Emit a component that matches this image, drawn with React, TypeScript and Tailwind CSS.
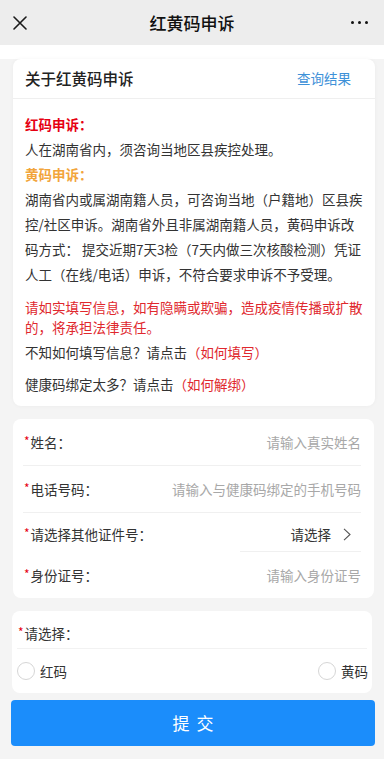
import React from "react";

const font = { fontFamily: '"Noto Sans CJK SC", "Noto Sans", sans-serif' };

function Star() {
  return <span className="text-[#e60012] text-[12px] leading-none relative -top-[1px] mr-[1px]">*</span>;
}

function Row({ label, placeholder }: { label: string; placeholder: string }) {
  return (
    <div className="h-[46px] flex items-center justify-between pl-[11px] pr-[13px]">
      <div className="flex items-center text-[#333]">
        <Star />
        <span>{label}</span>
      </div>
      <span className="text-[#a8a8a8]">{placeholder}</span>
    </div>
  );
}

export default function App() {
  return (
    <div style={font} className="w-[384px] min-h-[759px] bg-[#f4f4f4] text-[13.5px] text-[#333]">
      {/* top bar */}
      <div className="h-[45px] bg-[#ededed] grid grid-cols-[1fr_auto_1fr] items-center px-[13px]">
        <svg width="14" height="14" viewBox="0 0 14 14" className="justify-self-start">
          <path d="M1 1 L13 13 M13 1 L1 13" stroke="#1a1a1a" strokeWidth="1.6" strokeLinecap="round" />
        </svg>
        <div className="text-[17px] font-medium text-[#111] leading-none">红黄码申诉</div>
        <div className="justify-self-end flex gap-[3.5px] mr-[3px]">
          <span className="w-[3.5px] h-[3.5px] rounded-full bg-[#111]" />
          <span className="w-[3.5px] h-[3.5px] rounded-full bg-[#111]" />
          <span className="w-[3.5px] h-[3.5px] rounded-full bg-[#111]" />
        </div>
      </div>
      <div className="h-[14px] bg-white" />

      {/* card 1 */}
      <div className="ml-[13px] w-[362px] bg-white rounded-[8px] shadow-[0_0_4px_rgba(0,0,0,0.04)]">
        <div className="h-[40px] flex items-center justify-between pl-[12px] pr-[24px] border-b border-[#efefef]">
          <span className="text-[15.5px] font-medium text-[#222]">关于红黄码申诉</span>
          <span className="text-[13.5px] text-[#3e91d8]">查询结果</span>
        </div>
        <div className="pl-[12px] pr-[10px] pt-[13px] pb-[9px]">
          <div className="leading-[25px]">
            <div className="text-[#e60012] font-bold">红码申诉：</div>
            <div>人在湖南省内，须咨询当地区县疾控处理。</div>
            <div className="text-[#f2a53c] font-bold">黄码申诉：</div>
            <div>
              湖南省内或属湖南籍人员，可咨询当地（户籍地）区县疾控/社区申诉。湖南省外且非属湖南籍人员，黄码申诉改码方式： 提交近期7天3检（7天内做三次核酸检测）凭证人工（在线/电话）申诉，不符合要求申诉不予受理。
            </div>
          </div>
          <div className="mt-[10px] leading-[20px] text-[#e0282e]">
            请如实填写信息，如有隐瞒或欺骗，造成疫情传播或扩散的，将承担法律责任。
          </div>
          <div className="mt-[3px] leading-[25px]">
            不知如何填写信息？请点击<span className="text-[#e0282e]">（如何填写）</span>
          </div>
          <div className="mt-[7px] leading-[25px]">
            健康码绑定太多？请点击<span className="text-[#e0282e]">（如何解绑）</span>
          </div>
        </div>
      </div>

      {/* card 2 */}
      <div className="mt-[13px] ml-[13px] w-[361px] bg-white rounded-[8px]">
        <Row label="姓名：" placeholder="请输入真实姓名" />
        <div className="ml-[10px] mr-[13px] h-px bg-[#f0f0f0]" />
        <Row label="电话号码：" placeholder="请输入与健康码绑定的手机号码" />
        <div className="ml-[10px] mr-[13px] h-px bg-[#f0f0f0]" />
        <div className="h-[38px] flex items-center justify-between pl-[11px] pr-[23px] pt-[4px]">
          <div className="flex items-center">
            <Star />
            <span>请选择其他证件号：</span>
          </div>
          <div className="flex items-center gap-[12px]">
            <span className="text-[#333]">请选择</span>
            <svg width="8" height="13" viewBox="0 0 8 13">
              <path d="M1 0.8 L7 6.5 L1 12.2" fill="none" stroke="#555" strokeWidth="1.1" />
            </svg>
          </div>
        </div>
        <div className="ml-auto mr-[13px] w-[121px] h-px bg-[#f0f0f0]" />
        <Row label="身份证号：" placeholder="请输入身份证号" />
      </div>

      {/* card 3 */}
      <div className="mt-[13px] ml-[12px] w-[360px] bg-white rounded-[8px]">
        <div className="h-[37px] flex items-center pl-[6px] pt-[7px]">
          <Star />
          <span>请选择：</span>
        </div>
        <div className="mx-[5px] h-px bg-[#f2f2f2]" />
        <div className="h-[44px] flex items-center justify-between pl-[5px] pr-[4px]">
          <div className="flex items-center gap-[5px]">
            <span className="w-[18px] h-[18px] rounded-full border border-[#d6d6d6]" />
            <span>红码</span>
          </div>
          <div className="flex items-center gap-[5px]">
            <span className="w-[18px] h-[18px] rounded-full border border-[#d6d6d6]" />
            <span>黄码</span>
          </div>
        </div>
      </div>

      {/* submit */}
      <div className="mt-[7px] ml-[11px] w-[364px] h-[46px] rounded-[4px] bg-[#1b8dfb] flex items-center justify-center">
        <span className="text-white text-[17px] tracking-[7px] pl-[7px]">提交</span>
      </div>
      <div className="h-[11px]" />
    </div>
  );
}
